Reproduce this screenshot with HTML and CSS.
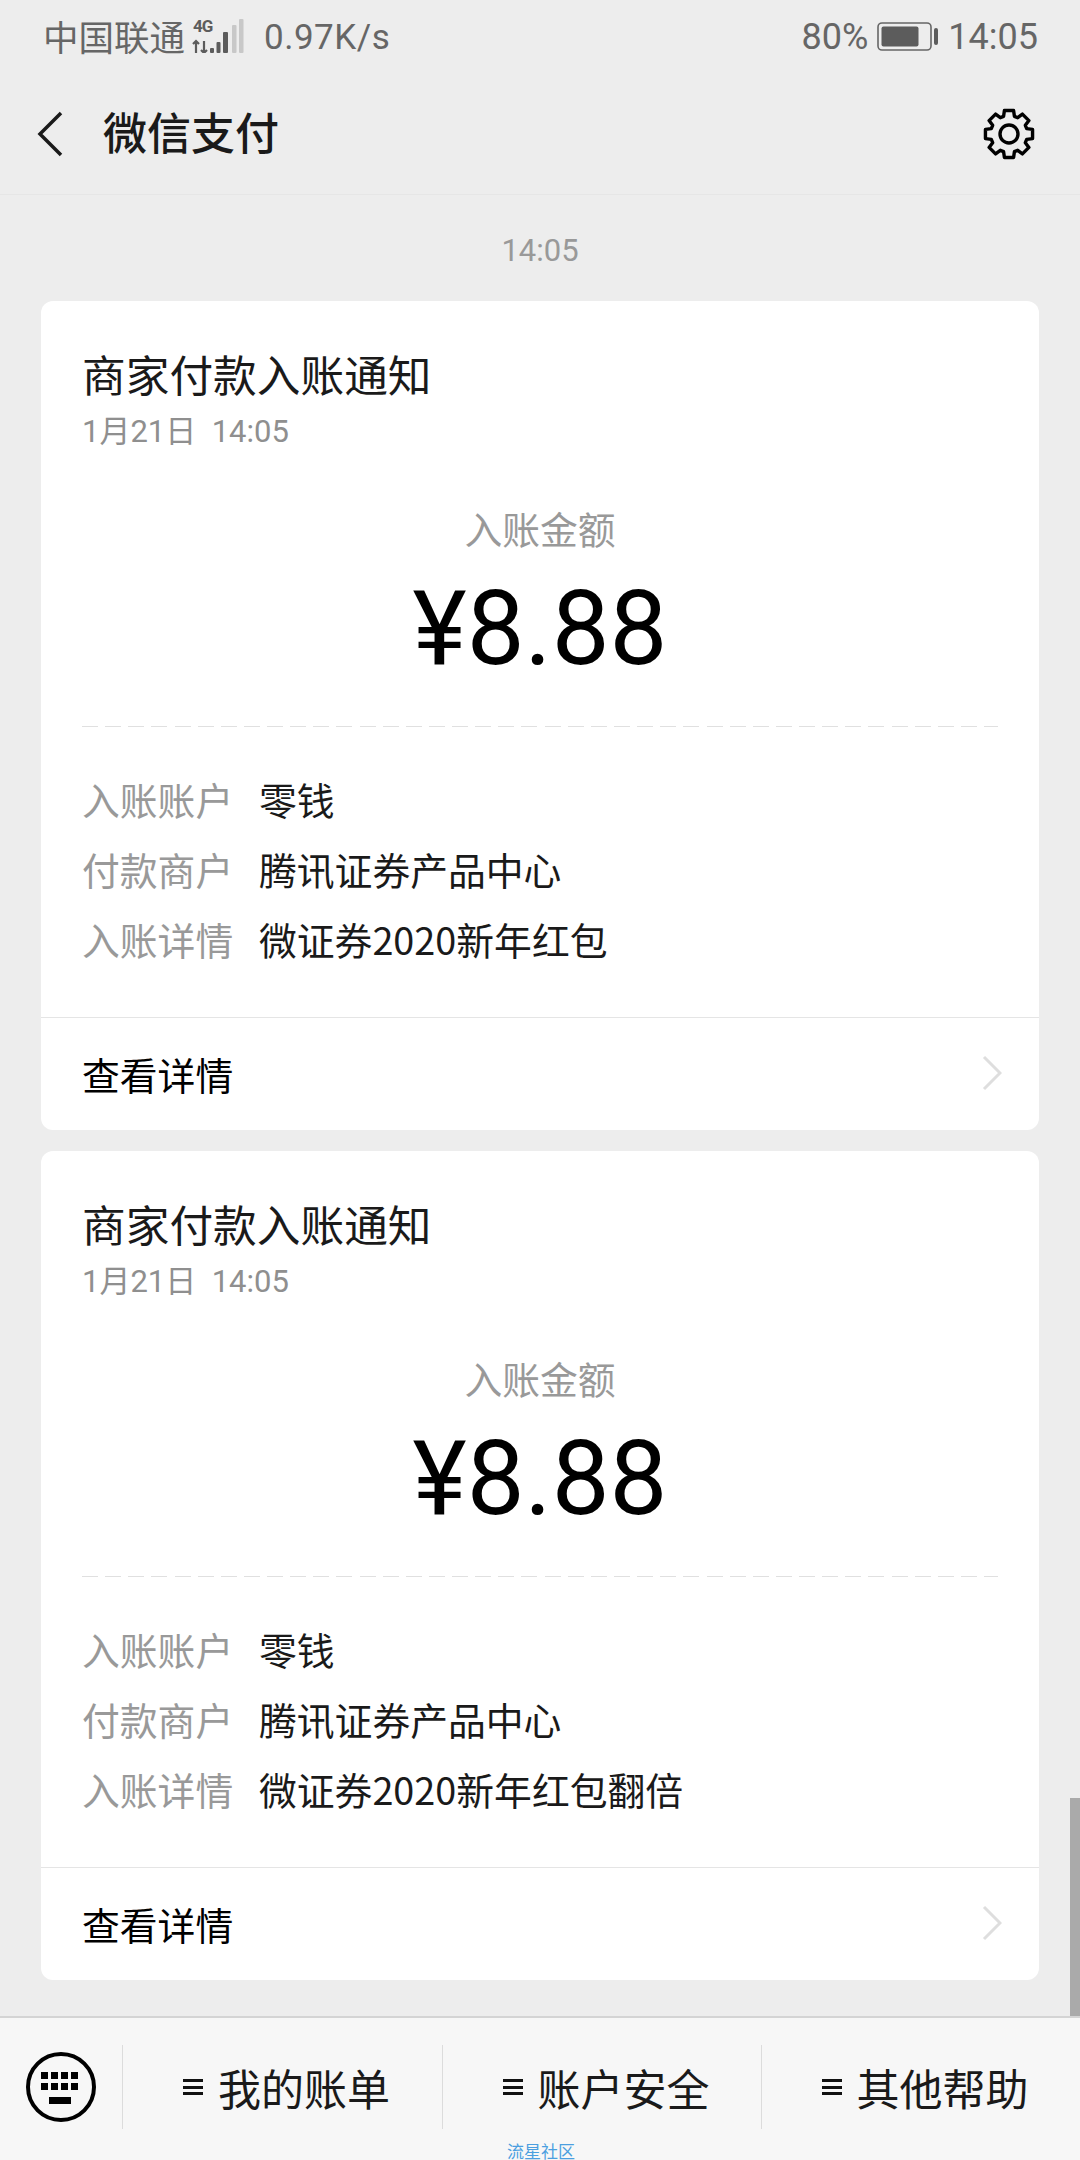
FILE: index.html
```html
<!DOCTYPE html>
<html lang="zh-CN">
<head>
<meta charset="utf-8">
<title>微信支付</title>
<link rel="stylesheet" href="styles.css">
</head>
<body>
<div class="phone">
  <header class="status">
    <div class="status-left">
      <span class="carrier">中国联通</span>
      <span class="signal">
        <span class="net">4G</span>
        <svg class="signal-svg" width="54" height="34" viewBox="0 0 54 34">
          <g stroke="#5c5c5c" stroke-width="2.200" fill="none"><path d="M6 34V22M3 25l3-3 3 3M14 22v12M11 31l3 3 3-3"/></g>
          <g fill="#5c5c5c"><rect x="20" y="29" width="4" height="5" rx="1"/><rect x="26.500" y="23" width="4" height="11" rx="1"/><rect x="33" y="13" width="5" height="21" rx="1"/></g>
          <g fill="#c8c8c8"><rect x="42" y="6" width="4.500" height="28" rx="1"/><rect x="49" y="0" width="4.500" height="34" rx="1"/></g>
        </svg>
      </span>
      <span class="speed">0.97K/s</span>
    </div>
    <div class="status-right">
      <span>80%</span>
      <svg class="battery" width="62" height="30" viewBox="0 0 62 30">
        <rect x="1" y="1" width="53" height="27" rx="4" fill="none" stroke="#666" stroke-width="1.600"/>
        <rect x="4.500" y="4.500" width="37" height="20" rx="2" fill="#5c5c5c"/>
        <rect x="57" y="6" width="4" height="17" rx="2" fill="#5c5c5c"/>
      </svg>
      <span>14:05</span>
    </div>
  </header>

  <nav class="nav">
    <svg class="back" width="26" height="46" viewBox="0 0 26 46"><path d="M24 2 3 23l21 21" fill="none" stroke="#1a1a1a" stroke-width="3.500"/></svg>
    <h1 class="nav-title">微信支付</h1>
    <svg class="gear" width="52" height="52" viewBox="-26 -26 52 52">
      <polygon fill="none" stroke="#000" stroke-width="3.400" stroke-linejoin="round" points="-5.41,-17.69 -4.58,-23.56 4.58,-23.56 5.41,-17.69 8.68,-16.33 13.42,-19.9 19.9,-13.42 16.33,-8.68 17.69,-5.41 23.56,-4.58 23.56,4.58 17.69,5.41 16.33,8.68 19.9,13.42 13.42,19.9 8.68,16.33 5.41,17.69 4.58,23.56 -4.58,23.56 -5.41,17.69 -8.68,16.33 -13.42,19.9 -19.9,13.42 -16.33,8.68 -17.69,5.41 -23.56,4.58 -23.56,-4.58 -17.69,-5.41 -16.33,-8.68 -19.9,-13.42 -13.42,-19.9 -8.68,-16.33"/>
      <circle cx="0" cy="0" r="9" fill="none" stroke="#000" stroke-width="3.400"/>
    </svg>
  </nav>

  <main class="feed">
    <div class="stamp">14:05</div>

    <article class="card">
      <div class="card-body">
        <h2 class="card-title">商家付款入账通知</h2>
        <div class="card-date">1月21日&nbsp;&nbsp;14:05</div>
        <div class="amount-label">入账金额</div>
        <div class="amount">¥8.88</div>
        <div class="dash"></div>
        <dl class="rows">
          <div class="row"><dt>入账账户</dt><dd>零钱</dd></div>
          <div class="row"><dt>付款商户</dt><dd>腾讯证券产品中心</dd></div>
          <div class="row"><dt>入账详情</dt><dd>微证券2020新年红包</dd></div>
        </dl>
      </div>
      <div class="card-foot">
        <span>查看详情</span>
        <svg class="chev" width="20" height="36" viewBox="0 0 20 36"><path d="M2 2l16 16L2 34" fill="none" stroke="#dedede" stroke-width="3"/></svg>
      </div>
    </article>

    <article class="card">
      <div class="card-body">
        <h2 class="card-title">商家付款入账通知</h2>
        <div class="card-date">1月21日&nbsp;&nbsp;14:05</div>
        <div class="amount-label">入账金额</div>
        <div class="amount">¥8.88</div>
        <div class="dash"></div>
        <dl class="rows">
          <div class="row"><dt>入账账户</dt><dd>零钱</dd></div>
          <div class="row"><dt>付款商户</dt><dd>腾讯证券产品中心</dd></div>
          <div class="row"><dt>入账详情</dt><dd>微证券2020新年红包翻倍</dd></div>
        </dl>
      </div>
      <div class="card-foot">
        <span>查看详情</span>
        <svg class="chev" width="20" height="36" viewBox="0 0 20 36"><path d="M2 2l16 16L2 34" fill="none" stroke="#dedede" stroke-width="3"/></svg>
      </div>
    </article>
    <div class="scrollbar"></div>
  </main>

  <footer class="bar">
    <div class="kbd">
      <svg width="70" height="72" viewBox="0 0 70 72">
        <circle cx="35" cy="36" r="33" fill="none" stroke="#000" stroke-width="4"/>
        <g fill="#000">
          <rect x="15" y="21" width="7" height="7"/><rect x="25" y="21" width="7" height="7"/><rect x="35" y="21" width="7" height="7"/><rect x="45" y="21" width="7" height="7"/>
          <rect x="15" y="32" width="7" height="7"/><rect x="25" y="32" width="7" height="7"/><rect x="35" y="32" width="7" height="7"/><rect x="45" y="32" width="7" height="7"/>
          <rect x="23" y="46" width="22" height="7"/>
        </g>
      </svg>
    </div>
    <div class="menu"><span class="burger"></span><span>我的账单</span></div>
    <div class="menu"><span class="burger"></span><span>账户安全</span></div>
    <div class="menu"><span class="burger"></span><span>其他帮助</span></div>
    <div class="mark">流星社区</div>
  </footer>
</div>
</body>
</html>
```
FILE: styles.css
```css
* { box-sizing: border-box; }
html, body { margin: 0; padding: 0; }
body {
  width: 1080px;
  height: 2160px;
  overflow: hidden;
  background: #ededed;
  font-family: "Noto Sans CJK SC", "Roboto", sans-serif;
}
.phone { width: 1080px; height: 2160px; display: flex; flex-direction: column; position: relative; }

.status {
  height: 74px;
  padding: 0 42px 0 43px;
  display: flex;
  justify-content: space-between;
  align-items: center;
  color: #666;
  font-family: "Roboto", "Noto Sans CJK SC", sans-serif;
  font-size: 36px;
}
.status-left, .status-right { display: flex; align-items: center; }
.carrier { font-family: "Noto Sans CJK SC", sans-serif; font-size: 35.500px; margin-bottom: 4px; }
.signal { position: relative; width: 54px; height: 34px; margin: 0 0 2px 5px; }
.signal-svg { display: block; }
.net {
  position: absolute;
  left: 3px; top: -1px;
  font-size: 17px;
  line-height: 16px;
  font-weight: 700;
  letter-spacing: -1px;
  color: #5c5c5c;
}
.speed { margin-left: 20px; font-size: 35px; letter-spacing: 0.5px; }
.status-right { gap: 9px; }

.nav {
  height: 121px;
  padding: 0 45px 0 37px;
  display: flex;
  align-items: center;
  border-bottom: 1px solid #e6e6e6;
}
.back { display: block; }
.nav-title {
  margin: 0 0 6px 40px;
  font-size: 44px;
  line-height: 60px;
  font-weight: 500;
  color: #1a1a1a;
}
.gear { margin-left: auto; display: block; }

.feed { flex: 1; min-height: 0; padding: 0 41px; position: relative; overflow: hidden; }
.stamp {
  height: 106px;
  padding-top: 36px;
  text-align: center;
  font-family: "Roboto", sans-serif;
  font-size: 31px;
  line-height: 40px;
  color: #999;
}
.card { background: #fff; border-radius: 12px; height: 829px; margin-bottom: 21px; display: flex; flex-direction: column; }
.card-body { flex: 1; padding: 44px 41px 0; }
.card-title { margin: 0; font-size: 43.700px; line-height: 56px; font-weight: 400; color: #1a1a1a; }
.card-date { margin-top: 10px; font-family: "Roboto", "Noto Sans CJK SC", sans-serif; font-size: 31px; line-height: 42px; color: #8f8f8f; }
.amount-label { margin-top: 51px; text-align: center; font-size: 37.800px; line-height: 48px; color: #999; }
.amount { margin-top: 17px; text-align: center; font-family: "Roboto", sans-serif; font-size: 103px; line-height: 120px; color: #000; }
.dash {
  margin-top: 37px;
  height: 1px;
  background: repeating-linear-gradient(90deg, #e0e0e0 0 16px, transparent 16px 23.130px);
}
.rows { margin: 36px 0 0; }
.row { display: flex; height: 70px; align-items: center; font-size: 37.800px; }
.row dt { width: 177px; color: #999; }
.row dd { margin: 0; color: #1a1a1a; }
.card-foot {
  height: 113px;
  padding: 0 37px 2px 41px;
  border-top: 1px solid #e5e5e5;
  display: flex;
  justify-content: space-between;
  align-items: center;
  font-size: 37.800px;
  color: #000;
}
.chev { display: block; }
.scrollbar { position: absolute; right: 0; bottom: 0; width: 10px; height: 218px; background: #aaa; }

.bar {
  height: 144px;
  background: #f7f7f7;
  border-top: 2px solid #d4d4d4;
  display: flex;
  align-items: center;
  padding-bottom: 4px;
  position: relative;
}
.kbd { width: 123px; height: 84px; padding-left: 26px; border-right: 1px solid #dcdcdc; display: flex; align-items: center; }
.menu {
  width: 319px;
  height: 84px;
  padding-left: 8px;
  display: flex;
  align-items: center;
  justify-content: center;
  gap: 15px;
  font-size: 43px;
  color: #1a1a1a;
}
.menu + .menu { border-left: 1px solid #dcdcdc; }
.burger {
  width: 20px; height: 16px;
  border-top: 3px solid #111;
  border-bottom: 3px solid #111;
  position: relative;
}
.burger::after { content: ""; position: absolute; left: 0; right: 0; top: 3.500px; height: 3px; background: #111; }
.mark {
  position: absolute;
  left: 2px; right: 0; bottom: 0;
  text-align: center;
  font-size: 17px;
  line-height: 19px;
  color: #4b9fe0;
}
```
